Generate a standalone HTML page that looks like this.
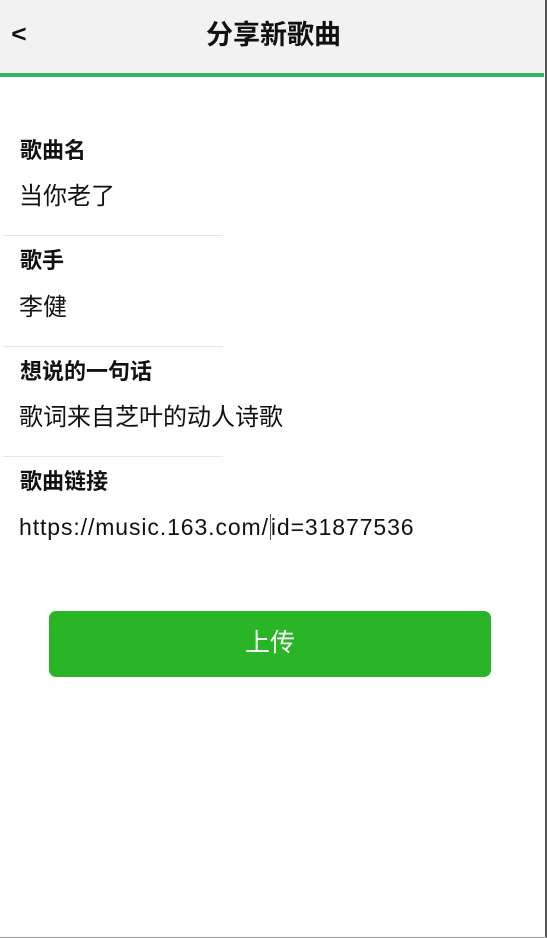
<!DOCTYPE html>
<html><head><meta charset="utf-8"><style>
*{margin:0;padding:0;box-sizing:border-box}
body{width:547px;height:938px;background:#fff;position:relative;overflow:hidden;font-family:"Liberation Sans","Noto Sans CJK SC",sans-serif;color:#111}
.hdr{position:absolute;left:0;top:0;width:547px;height:73px;background:#f2f2f2}
.hdr .t{position:absolute;left:0;right:0;top:19px;text-align:center;font-size:27px;font-weight:bold;line-height:32px}
.hdr .b{position:absolute;left:12px;top:21px;font-size:24px;font-weight:900;transform:scaleX(1.1)}
.gl{position:absolute;left:0;top:73px;width:544px;height:4px;background:#36b45e}
.rb{position:absolute;right:0;top:0;width:2px;height:938px;background:#555}
.bb{position:absolute;left:0;bottom:0;width:547px;height:1px;background:#999}
.lab{position:absolute;left:20px;font-size:22px;font-weight:bold;line-height:26px}
.val{position:absolute;left:19px;font-size:24px;line-height:28px}
.hr{position:absolute;left:3px;width:220px;height:1px;background:#e6e6e6}
.btn{position:absolute;left:49px;top:611px;width:442px;height:66px;background:#29b526;border-radius:7px;color:#fff;font-size:25px;text-align:center;line-height:64px}
</style></head><body>
<div class="hdr"><div class="b">&lt;</div><div class="t">分享新歌曲</div></div>
<div class="gl"></div>
<div class="lab" style="top:138px">歌曲名</div>
<div class="val" style="top:183px">当你老了</div>
<div class="hr" style="top:235px"></div>
<div class="lab" style="top:248px">歌手</div>
<div class="val" style="top:294px">李健</div>
<div class="hr" style="top:346px"></div>
<div class="lab" style="top:359px">想说的一句话</div>
<div class="val" style="top:404px">歌词来自芝叶的动人诗歌</div>
<div class="hr" style="top:456px"></div>
<div class="lab" style="top:469px">歌曲链接</div>
<div class="val" style="top:513px;font-size:23px;letter-spacing:0.9px">https://music.163.com/<span style="border-left:1px solid #555;margin-left:1px"></span>id=31877536</div>
<div class="btn">上传</div>
<div class="rb"></div><div class="bb"></div>
</body></html>
